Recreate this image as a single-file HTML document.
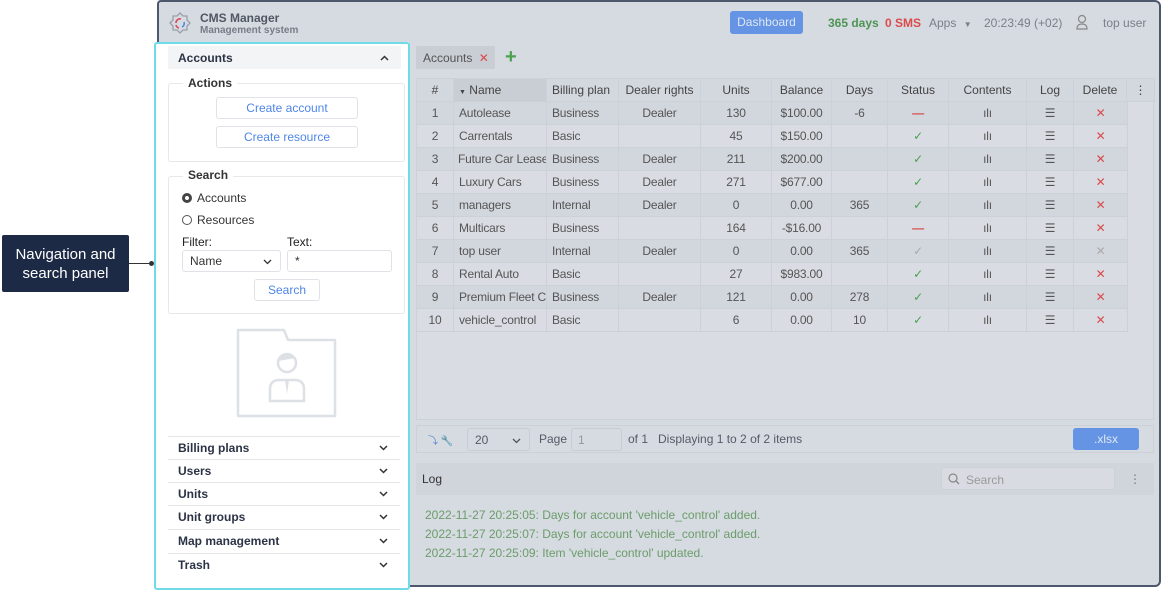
<!DOCTYPE html>
<html><head><meta charset="utf-8"><style>
*{box-sizing:border-box;margin:0;padding:0}
body{width:1161px;height:591px;background:#fff;font-family:"Liberation Sans",sans-serif;position:relative;overflow:hidden;font-size:12px;color:#555b66}
.abs{position:absolute}
#app{left:157px;top:0;width:1004px;height:587px;background:#d6dae1;border:2px solid #4d586d;border-radius:4px 6px 6px 6px}
#left{left:157px;top:42px;width:252px;height:545px;background:#fff}
#hl{left:154px;top:42px;width:256px;height:548px;border:2px solid #70dbe8;border-radius:3px}
.sec{border:1px solid #e6e8ec;border-radius:3px}
.btn{border:1px solid #dfe2e6;border-radius:3px;color:#4f86e8;text-align:center;font-size:12px;background:#fff}
.lbl{font-size:12px;color:#222}
table{border-collapse:collapse;font-size:12px;color:#555}
td,th{height:23px;border:1px solid #ccd0d7;font-weight:normal;white-space:nowrap;overflow:hidden;padding:0 5px}
th{background:#d3d7de;color:#444}
tr:nth-child(even) td{background:#d9dde3}
tr:nth-child(odd) td{background:#d2d6dd}
.c{text-align:center}
.acc{left:168px;width:232px;height:23px;border-top:1px solid #e4e6ea;font-size:12px;font-weight:bold;color:#2b3345;padding:4px 0 0 10px}
.chev{position:absolute;right:12px;top:8px}
.g{color:#4ba24e}.rd{color:#d94a4a}
</style></head><body>
<div id="app" class="abs"></div>
<svg class="abs" style="left:166px;top:10px" width="28" height="28" viewBox="0 0 28 28"><path d="M14 2l3 3h4v4l3 3-3 3v4h-4l-3 3-3-3H7v-4L4 12l3-3V5h4z" fill="none" stroke="#9aa0aa" stroke-width="1.3" transform="translate(0,1)"/><path d="M10 13a4 4 0 0 1 5-4" stroke="#d94a5a" stroke-width="1.6" fill="none"/><path d="M18 12a4 4 0 0 1-2 5" stroke="#4f86e8" stroke-width="1.6" fill="none"/><path d="M13 18a4 4 0 0 1-3-3" stroke="#d94a5a" stroke-width="1.6" fill="none"/></svg>
<div class="abs" style="left:200px;top:11px;font-size:12px;font-weight:bold;color:#505663">CMS Manager</div>
<div class="abs" style="left:200px;top:25px;font-size:10px;color:#777d88;font-weight:bold">Management system</div>
<div class="abs" style="left:730px;top:11px;width:73px;height:23px;background:#6494e3;border-radius:3px;color:#dfe7f5;text-align:center;line-height:23px">Dashboard</div>
<div class="abs" style="left:828px;top:16px;color:#4f9455;font-weight:bold">365 days</div>
<div class="abs" style="left:885px;top:16px;color:#db4b4b;font-weight:bold">0 SMS</div>
<div class="abs" style="left:929px;top:16px;color:#7a7f88">Apps <span style="font-size:8px;margin-left:4px">▼</span></div>
<div class="abs" style="left:984px;top:16px;color:#7a7f88">20:23:49 (+02)</div>
<svg class="abs" style="left:1075px;top:14px" width="14" height="16" viewBox="0 0 14 16"><circle cx="7" cy="5" r="3.5" fill="none" stroke="#888" stroke-width="1.2"/><path d="M2 15c0-4 2-5 5-5s5 1 5 5z" fill="none" stroke="#888" stroke-width="1.2"/></svg>
<div class="abs" style="left:1103px;top:16px;color:#7a7f88">top user</div>

<div id="left" class="abs"></div>
<div class="abs" style="left:168px;top:46px;width:233px;height:23px;background:#f3f4f6;font-weight:bold;color:#2b3345;padding:5px 0 0 10px">Accounts<svg class="chev" style="top:9px" width="9" height="6"><path d="M1 5l3.5-3.5L8 5" fill="none" stroke="#333" stroke-width="1.5"/></svg></div>
<div class="abs sec" style="left:168px;top:83px;width:237px;height:79px"></div>
<div class="abs lbl" style="left:183px;top:76px;background:#fff;padding:0 5px;font-weight:bold;color:#333">Actions</div>
<div class="abs btn" style="left:216px;top:97px;width:142px;height:22px;line-height:20px">Create account</div>
<div class="abs btn" style="left:216px;top:126px;width:142px;height:22px;line-height:20px">Create resource</div>
<div class="abs sec" style="left:168px;top:176px;width:237px;height:138px"></div>
<div class="abs lbl" style="left:183px;top:168px;background:#fff;padding:0 5px;font-weight:bold;color:#333">Search</div>
<div class="abs" style="left:182px;top:193px;width:10px;height:10px;border-radius:50%;border:3px solid #444"></div>
<div class="abs lbl" style="left:197px;top:191px;color:#333">Accounts</div>
<div class="abs" style="left:182px;top:215px;width:10px;height:10px;border-radius:50%;border:1px solid #555"></div>
<div class="abs lbl" style="left:197px;top:213px;color:#333">Resources</div>
<div class="abs lbl" style="left:182px;top:235px">Filter:</div>
<div class="abs lbl" style="left:287px;top:235px">Text:</div>
<div class="abs" style="left:182px;top:250px;width:99px;height:22px;border:1px solid #dfe2e6;border-radius:3px;padding:3px 0 0 7px;color:#333">Name<svg style="position:absolute;right:8px;top:8px" width="9" height="6"><path d="M1 1l3.5 3.5L8 1" fill="none" stroke="#333" stroke-width="1.3"/></svg></div>
<div class="abs" style="left:287px;top:250px;width:105px;height:22px;border:1px solid #dfe2e6;border-radius:3px;padding:3px 0 0 7px;color:#333">*</div>
<div class="abs btn" style="left:254px;top:279px;width:66px;height:22px;line-height:20px">Search</div>
<svg class="abs" style="left:236px;top:328px" width="102" height="90" viewBox="0 0 102 90"><path d="M2 2h46l4 10h47v76H2z" fill="none" stroke="#dde0e5" stroke-width="2.5" stroke-linejoin="round"/><circle cx="51" cy="35" r="9" fill="none" stroke="#dde0e5" stroke-width="2.5"/><path d="M42 33q2-11 18-3" fill="#dde0e5"/><path d="M34 73v-12q0-8 8-9h18q8 1 8 9v12z" fill="none" stroke="#dde0e5" stroke-width="2.5"/><path d="M49 52l2 14 2-14z" fill="#dde0e5"/></svg>
<div class="abs acc" style="top:436px">Billing plans<svg class="chev" width="9" height="6"><path d="M1 1l3.5 3.5L8 1" fill="none" stroke="#333" stroke-width="1.5"/></svg></div>
<div class="abs acc" style="top:459px">Users<svg class="chev" width="9" height="6"><path d="M1 1l3.5 3.5L8 1" fill="none" stroke="#333" stroke-width="1.5"/></svg></div>
<div class="abs acc" style="top:482px">Units<svg class="chev" width="9" height="6"><path d="M1 1l3.5 3.5L8 1" fill="none" stroke="#333" stroke-width="1.5"/></svg></div>
<div class="abs acc" style="top:505px">Unit groups<svg class="chev" width="9" height="6"><path d="M1 1l3.5 3.5L8 1" fill="none" stroke="#333" stroke-width="1.5"/></svg></div>
<div class="abs acc" style="top:529px">Map management<svg class="chev" width="9" height="6"><path d="M1 1l3.5 3.5L8 1" fill="none" stroke="#333" stroke-width="1.5"/></svg></div>
<div class="abs acc" style="top:553px">Trash<svg class="chev" width="9" height="6"><path d="M1 1l3.5 3.5L8 1" fill="none" stroke="#333" stroke-width="1.5"/></svg></div>
<div id="hl" class="abs"></div>

<div class="abs" style="left:2px;top:235px;width:127px;height:57px;background:#1c2a45;color:#fff;font-size:15px;text-align:center;line-height:19px;padding-top:10px;border-radius:2px">Navigation and<br>search panel</div>
<div class="abs" style="left:129px;top:263px;width:24px;height:1px;background:#333"></div>
<div class="abs" style="left:149px;top:261px;width:5px;height:5px;border-radius:50%;background:#333"></div>

<div class="abs" style="left:416px;top:46px;width:79px;height:23px;background:#c9cdd4;border-radius:2px;padding:5px 0 0 7px;color:#555">Accounts <span style="color:#d94a4a;margin-left:3px">✕</span></div>
<div class="abs" style="left:505px;top:46px;color:#4ba24e;font-size:20px;font-weight:bold;line-height:22px">+</div>

<div class="abs" style="left:416px;top:78px;width:738px;height:342px;background:#d9dde3;border:1px solid #ccd0d7"></div>
<table class="abs" style="left:416px;top:78px;table-layout:fixed;width:738px">
<colgroup><col style="width:37px"><col style="width:93px"><col style="width:72px"><col style="width:82px"><col style="width:71px"><col style="width:60px"><col style="width:56px"><col style="width:61px"><col style="width:78px"><col style="width:47px"><col style="width:53px"><col style="width:28px"></colgroup>
<tr><th class="c">#</th><th style="background:#c9cdd4;text-align:left"><span style="font-size:7px">▼</span> Name</th><th style="text-align:left">Billing plan</th><th class="c">Dealer rights</th><th class="c">Units</th><th class="c">Balance</th><th class="c">Days</th><th class="c">Status</th><th class="c">Contents</th><th class="c">Log</th><th class="c">Delete</th><th class="c">⋮</th></tr>
</table>
<table class="abs" style="left:416px;top:101px;table-layout:fixed;width:711px;letter-spacing:-0.2px">
<colgroup><col style="width:37px"><col style="width:93px"><col style="width:72px"><col style="width:82px"><col style="width:71px"><col style="width:60px"><col style="width:56px"><col style="width:61px"><col style="width:78px"><col style="width:47px"><col style="width:54px"></colgroup>
<tr><td class="c">1</td><td>Autolease</td><td>Business</td><td class="c">Dealer</td><td class="c">130</td><td class="c">$100.00</td><td class="c">-6</td><td class="c rd"><b>—</b></td><td class="c">ılı</td><td class="c">☰</td><td class="c rd">✕</td></tr>
<tr><td class="c">2</td><td>Carrentals</td><td>Basic</td><td></td><td class="c">45</td><td class="c">$150.00</td><td></td><td class="c g">✓</td><td class="c">ılı</td><td class="c">☰</td><td class="c rd">✕</td></tr>
<tr><td class="c">3</td><td style="padding-left:4px">Future Car Lease</td><td>Business</td><td class="c">Dealer</td><td class="c">211</td><td class="c">$200.00</td><td></td><td class="c g">✓</td><td class="c">ılı</td><td class="c">☰</td><td class="c rd">✕</td></tr>
<tr><td class="c">4</td><td>Luxury Cars</td><td>Business</td><td class="c">Dealer</td><td class="c">271</td><td class="c">$677.00</td><td></td><td class="c g">✓</td><td class="c">ılı</td><td class="c">☰</td><td class="c rd">✕</td></tr>
<tr><td class="c">5</td><td>managers</td><td>Internal</td><td class="c">Dealer</td><td class="c">0</td><td class="c">0.00</td><td class="c">365</td><td class="c g">✓</td><td class="c">ılı</td><td class="c">☰</td><td class="c rd">✕</td></tr>
<tr><td class="c">6</td><td>Multicars</td><td>Business</td><td></td><td class="c">164</td><td class="c">-$16.00</td><td></td><td class="c rd"><b>—</b></td><td class="c">ılı</td><td class="c">☰</td><td class="c rd">✕</td></tr>
<tr><td class="c">7</td><td>top user</td><td>Internal</td><td class="c">Dealer</td><td class="c">0</td><td class="c">0.00</td><td class="c">365</td><td class="c" style="color:#aaa">✓</td><td class="c">ılı</td><td class="c">☰</td><td class="c" style="color:#aaa">✕</td></tr>
<tr><td class="c">8</td><td>Rental Auto</td><td>Basic</td><td></td><td class="c">27</td><td class="c">$983.00</td><td></td><td class="c g">✓</td><td class="c">ılı</td><td class="c">☰</td><td class="c rd">✕</td></tr>
<tr><td class="c">9</td><td>Premium Fleet Co</td><td>Business</td><td class="c">Dealer</td><td class="c">121</td><td class="c">0.00</td><td class="c">278</td><td class="c g">✓</td><td class="c">ılı</td><td class="c">☰</td><td class="c rd">✕</td></tr>
<tr><td class="c">10</td><td>vehicle_control</td><td>Basic</td><td></td><td class="c">6</td><td class="c">0.00</td><td class="c">10</td><td class="c g">✓</td><td class="c">ılı</td><td class="c">☰</td><td class="c rd">✕</td></tr>
</table>

<div class="abs" style="left:416px;top:425px;width:738px;height:28px;border:1px solid #ccd0d7;background:#d6dae1"></div>
<div class="abs" style="left:428px;top:432px;color:#5a86d0;font-size:10px">⤵ <span style="color:#555">🔧</span></div>
<div class="abs" style="left:467px;top:428px;width:63px;height:23px;border:1px solid #c8ccd3;border-radius:3px;padding:4px 0 0 7px">20<svg style="position:absolute;right:8px;top:9px" width="9" height="6"><path d="M1 1l3.5 3.5L8 1" fill="none" stroke="#555" stroke-width="1.3"/></svg></div>
<div class="abs" style="left:539px;top:432px">Page</div>
<div class="abs" style="left:571px;top:428px;width:51px;height:23px;border:1px solid #c8ccd3;border-radius:3px;padding:4px 0 0 6px;color:#999">1</div>
<div class="abs" style="left:628px;top:432px">of 1&nbsp;&nbsp;&nbsp;Displaying 1 to 2 of 2 items</div>
<div class="abs" style="left:1073px;top:428px;width:66px;height:22px;background:#6494e3;border-radius:3px;color:#dfe7f5;text-align:center;line-height:22px">.xlsx</div>

<div class="abs" style="left:416px;top:463px;width:738px;height:32px;background:#d0d4db"></div>
<div class="abs" style="left:422px;top:472px;color:#333">Log</div>
<div class="abs" style="left:941px;top:467px;width:174px;height:23px;border:1px solid #ccd0d7;border-radius:3px;background:#d8dce2;padding:5px 0 0 24px;color:#999">Search</div>
<svg class="abs" style="left:948px;top:473px" width="12" height="12"><circle cx="5" cy="5" r="4" fill="none" stroke="#888" stroke-width="1.2"/><path d="M8 8l3 3" stroke="#888" stroke-width="1.3"/></svg>
<div class="abs" style="left:1129px;top:472px;color:#777">⋮</div>
<div class="abs" style="left:425px;top:506px;color:#6b9d6a;line-height:19px">2022-11-27 20:25:05: Days for account 'vehicle_control' added.<br>2022-11-27 20:25:07: Days for account 'vehicle_control' added.<br>2022-11-27 20:25:09: Item 'vehicle_control' updated.</div>
</body></html>
